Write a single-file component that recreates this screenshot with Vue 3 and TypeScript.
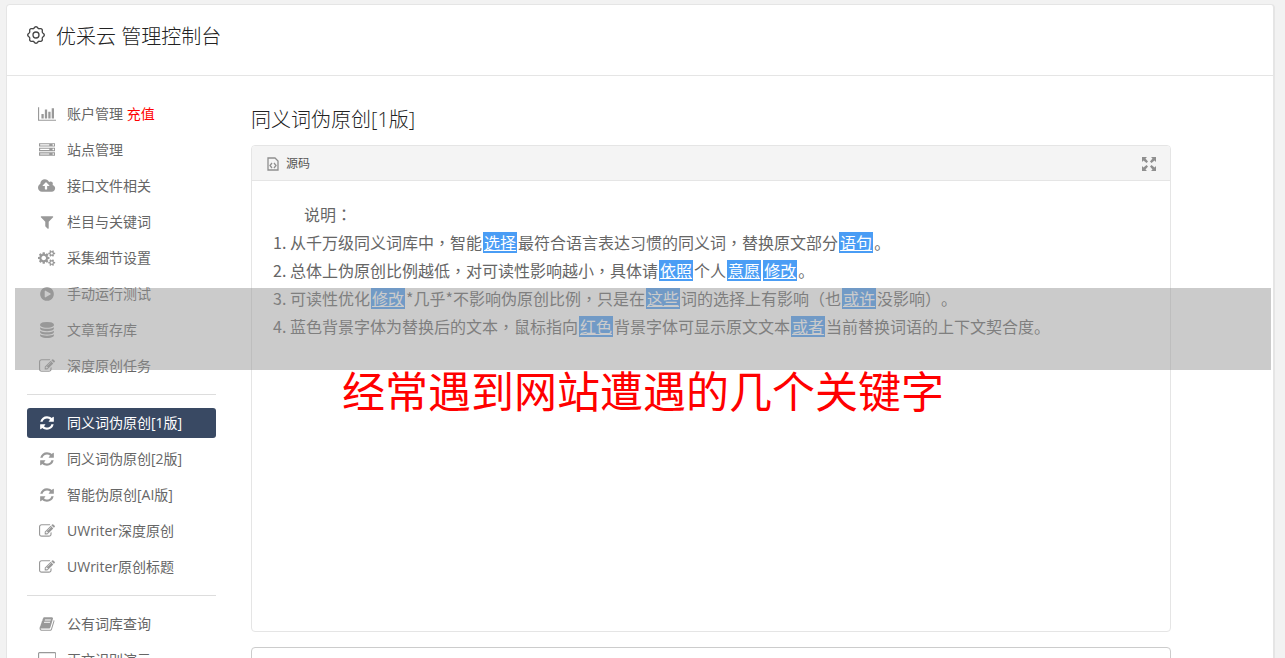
<script setup lang="ts">
interface Icon {
  w: number
  d: string
}
interface MenuItem {
  icon: string
  label: string
  extra?: string
  active?: boolean
}
interface Piece {
  kind: 'text' | 'swap' | 'mid'
  text: string
}

const icons: Record<string, Icon> = {
  chart: {
    w: 2048,
    d: 'M640 896v512h-256v-512h256zm384-512v1024h-256v-1024h256zm1024 1152v128h-2048v-1536h128v1408h1920zm-640-896v768h-256v-768h256zm384-384v1152h-256v-1152h256z',
  },
  server: {
    w: 1792,
    d: 'M128 1408h1024v-128h-1024v128zm0-512h1024v-128h-1024v128zm1568 448q0-40-28-68t-68-28-68 28-28 68 28 68 68 28 68-28 28-68zm-1568-960h1024v-128h-1024v128zm1568 448q0-40-28-68t-68-28-68 28-28 68 28 68 68 28 68-28 28-68zm0-512q0-40-28-68t-68-28-68 28-28 68 28 68 68 28 68-28 28-68zm96 832v384h-1792v-384h1792zm0-512v384h-1792v-384h1792zm0-512v384h-1792v-384h1792z',
  },
  cloud: {
    w: 1920,
    d: 'M1280 864q0-14-9-23l-352-352q-9-9-23-9t-23 9l-351 351q-10 12-10 24 0 14 9 23t23 9h224v352q0 13 9.5 22.5t22.5 9.5h192q13 0 22.5-9.5t9.5-22.5v-352h224q13 0 22.5-9.5t9.5-22.5zm640 288q0 159-112.5 271.5t-271.5 112.5h-1088q-185 0-316.5-131.5t-131.5-316.5q0-130 70-240t188-165q-2-30-2-43 0-212 150-362t362-150q156 0 285.5 87t188.5 231q71-62 166-62 106 0 181 75t75 181q0 76-41 138 130 31 213.5 135.5t83.5 238.5z',
  },
  filter: {
    w: 1792,
    d: 'M1595 295q17 41-14 70l-493 493v742q0 42-39 59-13 5-25 5-27 0-45-19l-256-256q-19-19-19-45v-486l-493-493q-31-29-14-70 17-39 59-39h1280q42 0 59 39z',
  },
  cogs: {
    w: 1920,
    d: 'M896 896q0-106-75-181t-181-75-181 75-75 181 75 181 181 75 181-75 75-181zm768 512q0-52-38-90t-90-38-90 38-38 90q0 53 37.5 90.5t90.5 37.5 90.5-37.5 37.5-90.5zm0-1024q0-52-38-90t-90-38-90 38-38 90q0 53 37.5 90.5t90.5 37.5 90.5-37.5 37.5-90.5zm-384 421v185q0 10-7 19.5t-16 10.5l-155 24q-11 35-32 76 34 48 90 115 7 11 7 20 0 12-7 19-23 30-82.5 89.5t-78.5 59.5q-11 0-21-7l-115-90q-37 19-77 31-11 108-23 155-7 24-30 24h-186q-11 0-20-7.5t-10-17.5l-23-153q-34-10-75-31l-118 89q-7 7-20 7-11 0-21-8-144-133-144-160 0-9 7-19 10-14 41-53t47-61q-23-44-35-82l-152-24q-10-1-17-9.5t-7-19.5v-185q0-10 7-19.5t16-10.5l155-24q11-35 32-76-34-48-90-115-7-11-7-20 0-12 7-20 22-30 82-89t79-59q11 0 21 7l115 90q34-18 77-32 11-108 23-154 7-24 30-24h186q11 0 20 7.5t10 17.5l23 153q34 10 75 31l118-89q8-7 20-7 11 0 21 8 144 133 144 160 0 8-7 19-12 16-42 54t-45 60q23 48 34 82l152 23q10 2 17 10.5t7 19.5zm640 533v140q0 16-149 31-12 27-30 52 51 113 51 138 0 4-4 7-122 71-124 71-8 0-46-47t-52-68q-20 2-30 2t-30-2q-14 21-52 68t-46 47q-2 0-124-71-4-3-4-7 0-25 51-138-18-25-30-52-149-15-149-31v-140q0-16 149-31 13-29 30-52-51-113-51-138 0-4 4-7 4-2 35-20t59-34 30-16q8 0 46 46.5t52 67.5q20-2 30-2t30 2q51-71 92-112l6-2q4 0 124 70 4 3 4 7 0 25-51 138 17 23 30 52 149 15 149 31zm0-1024v140q0 16-149 31-12 27-30 52 51 113 51 138 0 4-4 7-122 71-124 71-8 0-46-47t-52-68q-20 2-30 2t-30-2q-14 21-52 68t-46 47q-2 0-124-71-4-3-4-7 0-25 51-138-18-25-30-52-149-15-149-31v-140q0-16 149-31 13-29 30-52-51-113-51-138 0-4 4-7 4-2 35-20t59-34 30-16q8 0 46 46.5t52 67.5q20-2 30-2t30 2q51-71 92-112l6-2q4 0 124 70 4 3 4 7 0 25-51 138 17 23 30 52 149 15 149 31z',
  },
  play: {
    w: 1792,
    d: 'M896 128q209 0 385.5 103t279.5 279.5 103 385.5-103 385.5-279.5 279.5-385.5 103-385.5-103-279.5-279.5-103-385.5 103-385.5 279.5-279.5 385.5-103zm384 823q32-18 32-55t-32-55l-544-320q-31-19-64-1-32 19-32 56v640q0 37 32 56 16 8 32 8 17 0 32-9z',
  },
  database: {
    w: 1792,
    d: 'M896 768q237 0 443-43t325-127v170q0 69-103 128t-280 93.5-385 34.5-385-34.5-280-93.5-103-128v-170q119 84 325 127t443 43zm0 768q237 0 443-43t325-127v170q0 69-103 128t-280 93.5-385 34.5-385-34.5-280-93.5-103-128v-170q119 84 325 127t443 43zm0-384q237 0 443-43t325-127v170q0 69-103 128t-280 93.5-385 34.5-385-34.5-280-93.5-103-128v-170q119 84 325 127t443 43zm0-1152q208 0 385 34.5t280 93.5 103 128v128q0 69-103 128t-280 93.5-385 34.5-385-34.5-280-93.5-103-128v-128q0-69 103-128t280-93.5 385-34.5z',
  },
  edit: {
    w: 1792,
    d: 'M888 1184l116-116-152-152-116 116v56h96v96h56zm440-720q-16-16-33 1l-350 350q-17 17-1 33t33-1l350-350q17-17 1-33zm80 594v190q0 119-84.5 203.5t-203.5 84.5h-832q-119 0-203.5-84.5t-84.5-203.5v-832q0-119 84.5-203.5t203.5-84.5h832q63 0 117 25 15 7 18 23 3 17-9 29l-49 49q-14 14-32 8-23-6-45-6h-832q-66 0-113 47t-47 113v832q0 66 47 113t113 47h832q66 0 113-47t47-113v-126q0-13 9-22l64-64q15-15 35-7t20 29zm-96-738l288 288-672 672h-288v-288zm444 132l-92 92-288-288 92-92q28-28 68-28t68 28l152 152q28 28 28 68t-28 68z',
  },
  refresh: {
    w: 1792,
    d: 'M1639 1056q0 5-1 7-64 268-268 434.5t-478 166.5q-146 0-282.5-55t-243.5-157l-129 129q-19 19-45 19t-45-19-19-45v-448q0-26 19-45t45-19h448q26 0 45 19t19 45-19 45l-137 137q71 66 161 102t187 36q134 0 250-65t186-179q11-17 53-117 8-23 30-23h192q13 0 22.5 9.5t9.5 22.5zm25-800v448q0 26-19 45t-45 19h-448q-26 0-45-19t-19-45 19-45l138-138q-148-137-349-137-134 0-250 65t-186 179q-11 17-53 117-8 23-30 23h-199q-13 0-22.5-9.5t-9.5-22.5v-7q65-268 270-434.5t480-166.5q146 0 284 55.5t245 156.5l130-129q19-19 45-19t45 19 19 45z',
  },
  book: {
    w: 1792,
    d: 'M1703 478q40 57 18 129l-275 906q-19 64-76.5 107.5t-122.5 43.5h-923q-77 0-148.5-53.5t-99.5-131.5q-24-67-2-127 0-4 3-27t4-37q1-8-3-21.5t-3-19.5q2-11 8-21t16.5-23.5 16.5-23.5q23-38 45-91.5t30-91.5q3-10 .5-30t-.5-28q3-11 17-28t17-23q21-36 42-92t25-90q1-9-2.5-32t.5-28q4-13 22-30.5t22-22.5q19-26 42.5-84.5t27.5-96.5q1-8-3-25.5t-2-26.5q2-8 9-18t18-23 17-21q8-12 16.5-30.5t15-35 16-36 19.5-32 26.5-23.5 36-11.5 47.5 5.5l-1 3q38-9 51-9h761q74 0 114 56t18 130l-274 906q-36 119-71.5 153.5t-128.5 34.5h-869q-27 0-38 15-11 16-1 43 24 70 144 70h923q29 0 56-15.5t35-41.5l300-987q7-22 5-57 38 15 59 43zm-1064 2q-4 13 2 22.5t20 9.5h608q13 0 25.5-9.5t16.5-22.5l21-64q4-13-2-22.5t-20-9.5h-608q-13 0-25.5 9.5t-16.5 22.5zm-83 256q-4 13 2 22.5t20 9.5h608q13 0 25.5-9.5t16.5-22.5l21-64q4-13-2-22.5t-20-9.5h-608q-13 0-25.5 9.5t-16.5 22.5z',
  },
  screen: {
    w: 2048,
    d: 'M160 0h1728q66 0 113 47t47 113v1088q0 66-47 113t-113 47h-1728q-66 0-113-47t-47-113v-1088q0-66 47-113t113-47zm0 128q-32 0-32 32v1088q0 32 32 32h1728q32 0 32-32v-1088q0-32-32-32zm480 1408h768v128h-768z',
  },
}

const groups: MenuItem[][] = [
  [
    { icon: 'chart', label: '账户管理', extra: '充值' },
    { icon: 'server', label: '站点管理' },
    { icon: 'cloud', label: '接口文件相关' },
    { icon: 'filter', label: '栏目与关键词' },
    { icon: 'cogs', label: '采集细节设置' },
    { icon: 'play', label: '手动运行测试' },
    { icon: 'database', label: '文章暂存库' },
    { icon: 'edit', label: '深度原创任务' },
  ],
  [
    { icon: 'refresh', label: '同义词伪原创[1版]', active: true },
    { icon: 'refresh', label: '同义词伪原创[2版]' },
    { icon: 'refresh', label: '智能伪原创[AI版]' },
    { icon: 'edit', label: 'UWriter深度原创' },
    { icon: 'edit', label: 'UWriter原创标题' },
  ],
  [
    { icon: 'book', label: '公有词库查询' },
    { icon: 'screen', label: '正文识别演示' },
  ],
]

// Replaced words are wrapped in braces; full-width commas and colons sit mid-cell.
function parse(line: string): Piece[] {
  return line
    .split(/(\{[^}]+\}|[，：])/)
    .filter((s) => s.length > 0)
    .map((s): Piece => {
      if (s.startsWith('{')) return { kind: 'swap', text: s.slice(1, -1) }
      if (s === '，' || s === '：') return { kind: 'mid', text: s }
      return { kind: 'text', text: s }
    })
}

const intro = parse('说明：')
const notes = [
  '从千万级同义词库中，智能{选择}最符合语言表达习惯的同义词，替换原文部分{语句}。',
  '总体上伪原创比例越低，对可读性影响越小，具体请{依照}个人{意愿}{修改}。',
  '可读性优化{修改}*几乎*不影响伪原创比例，只是在{这些}词的选择上有影响（也{或许}没影响）。',
  '蓝色背景字体为替换后的文本，鼠标指向{红色}背景字体可显示原文文本{或者}当前替换词语的上下文契合度。',
].map(parse)

const gear =
  Array.from({ length: 96 }, (_, i) => {
    const a = (i / 96) * Math.PI * 2
    const r = 7.6 + 0.7 * Math.cos(8 * a)
    return `${i ? 'L' : 'M'}${(10 + r * Math.cos(a)).toFixed(2)} ${(10 + r * Math.sin(a)).toFixed(2)}`
  }).join('') + 'Z'
</script>

<template>
  <div class="page">
    <div class="panel">
      <header class="top">
        <svg class="gear" viewBox="0 0 20 20" aria-hidden="true">
          <path :d="gear" />
          <circle cx="10" cy="10" r="3" />
        </svg>
        <h1>优采云 管理控制台</h1>
      </header>
      <div class="columns">
        <nav class="side">
          <ul v-for="(group, g) in groups" :key="g">
            <li v-for="item in group" :key="item.label">
              <a href="#" :class="{ active: item.active }">
                <span class="slot">
                  <svg class="icon" :viewBox="`0 0 ${icons[item.icon].w} 1792`" aria-hidden="true">
                    <path :d="icons[item.icon].d" />
                  </svg>
                </span>
                <span>{{ item.label }} <em v-if="item.extra">{{ item.extra }}</em></span>
              </a>
            </li>
          </ul>
        </nav>
        <main>
          <h2>同义词伪原创[1版]</h2>
          <section class="editor">
            <div class="tools">
              <button type="button">
                <svg class="doc" viewBox="0 0 12 14" aria-hidden="true">
                  <path d="M1 1h7l3 3v9H1z" />
                  <path d="M5 6L3 8.500L5 11M7 6l2 2.500L7 11" />
                </svg>
                源码
              </button>
              <button type="button" aria-label="全屏">
                <svg class="expand" viewBox="0 0 14 14" aria-hidden="true">
                  <path d="M0 0h5L3.500 1.500L6 4.500L4.500 6L1.500 3.500L0 5zM14 0v5l-1.500-1.500L9.500 6L8 4.500L10.500 1.500L9 0zM0 14V9l1.500 1.500L4.500 8L6 9.500L3.500 12.500L5 14zM14 14H9l1.500-1.500L8 9.500L9.500 8L12.500 10.500L14 9z" />
                </svg>
              </button>
            </div>
            <div class="body">
              <p><span v-for="(p, i) in intro" :key="i" :class="p.kind">{{ p.text }}</span></p>
              <ol>
                <li v-for="(note, n) in notes" :key="n"><span v-for="(p, i) in note" :key="i" :class="p.kind">{{ p.text }}</span></li>
              </ol>
            </div>
          </section>
          <section class="result"></section>
        </main>
      </div>
    </div>
    <div class="overlay">
      <div class="band"></div>
      <p>经常遇到网站遭遇的几个关键字</p>
    </div>
  </div>
</template>

<style>
body {
  margin: 0;
  background: #f2f2f2;
}
</style>

<style scoped>
.page {
  position: relative;
  height: 100vh;
  overflow: hidden;
  box-sizing: border-box;
  padding: 4px 10px 0 6px;
  background: #f2f2f2;
  color: #666;
  font: 400 14px/20px "Open Sans", "Noto Sans CJK SC", sans-serif;
  text-spacing-trim: space-all;
}
.panel {
  border: 1px solid #e5e5e5;
  border-right-width: 2px;
  border-radius: 4px;
  background: #fff;
}
.top {
  display: flex;
  align-items: flex-start;
  gap: 10px;
  box-sizing: border-box;
  height: 71px;
  padding: 18px 19px 0;
  border-bottom: 1px solid #e5e5e5;
}
.gear {
  width: 20px;
  height: 24px;
  fill: none;
  stroke: #444;
  stroke-width: 1.3;
}
h1,
h2 {
  margin: 0;
  color: #222;
  font-size: 20px;
  font-weight: 300;
  line-height: 28px;
}
.columns {
  display: flex;
  gap: 35px;
  padding: 23px 102px 0 20px;
}
.side {
  flex: none;
  width: 189px;
}
ul,
ol {
  margin: 0;
  padding: 0;
}
ul {
  display: flex;
  flex-direction: column;
  gap: 6px;
  list-style: none;
}
ul + ul {
  margin-top: 13px;
  padding-top: 13px;
  border-top: 1px solid #ddd;
}
.side a {
  display: flex;
  align-items: center;
  gap: 10px;
  height: 30px;
  padding-left: 10px;
  border-radius: 3px;
  color: #666;
  text-decoration: none;
}
.slot {
  display: flex;
  justify-content: center;
  width: 20px;
}
.icon {
  height: 16px;
  fill: #999;
}
.side a.active {
  background: #394963;
  color: #fff;
}
.active .icon {
  fill: #fff;
}
em {
  color: #f00;
  font-style: normal;
}
main {
  flex: 1;
  min-width: 0;
  padding-top: 7px;
}
.editor {
  margin-top: 11px;
  border: 1px solid #e5e5e5;
  border-radius: 4px;
}
.tools {
  display: flex;
  justify-content: space-between;
  align-items: center;
  box-sizing: border-box;
  height: 35px;
  padding: 2px 14px 0 15px;
  border-bottom: 1px solid #e5e5e5;
  border-radius: 3px 3px 0 0;
  background: #f4f4f4;
}
button {
  display: flex;
  align-items: center;
  gap: 7px;
  padding: 0;
  border: 0;
  background: none;
  color: #555;
  font: inherit;
  font-size: 12px;
}
.doc {
  width: 12px;
  height: 14px;
  fill: none;
  stroke: #8f8f8f;
  stroke-width: 1.3;
}
.expand {
  width: 14px;
  height: 14px;
  fill: #8f8f8f;
}
.body {
  min-height: 431px;
  padding: 19px 20px 0;
  font-family: "Noto Sans CJK SC", sans-serif;
  font-size: 16px;
  line-height: 28px;
}
.body p {
  margin: 0;
  padding-left: 32px;
}
ol {
  padding-left: 18px;
}
.mid {
  font-family: "Noto Sans CJK TC", sans-serif;
}
.swap {
  display: inline-block;
  margin: 0 1px;
  padding: 0 1px;
  background: #4a9df5;
  color: #fff;
  line-height: 21px;
  text-decoration: underline;
}
.result {
  height: 60px;
  margin-top: 15px;
  border: 1px solid #ccc;
  border-radius: 4px;
}
.overlay {
  position: absolute;
  top: 288px;
  right: 14px;
  left: 15px;
}
.band {
  height: 82px;
  background: rgba(151, 151, 151, 0.5);
}
.overlay p {
  margin: 0;
  color: #f00;
  font-size: 43px;
  font-weight: 400;
  line-height: 43px;
  text-align: center;
  white-space: nowrap;
}
</style>
